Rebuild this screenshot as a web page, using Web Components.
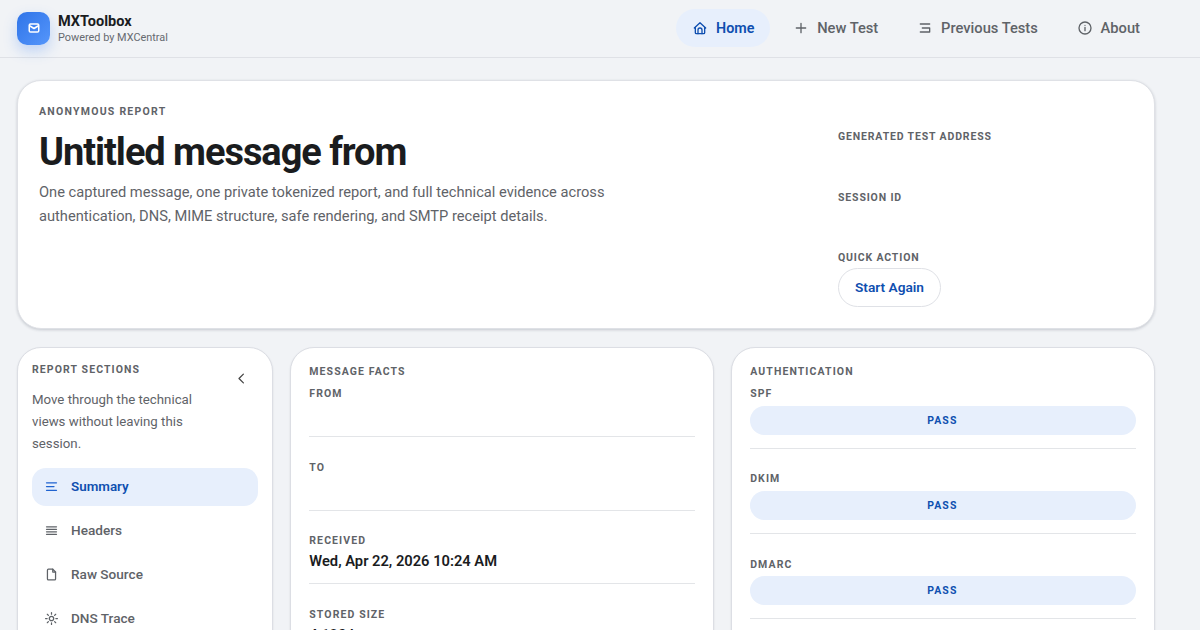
<!DOCTYPE html>
<html lang="en">
<head>
<meta charset="utf-8">
<title>MXToolbox</title>
<style>
  html, body { margin: 0; height: 630px; overflow: hidden; }
  body { background: #f1f3f6; font-family: Roboto, "Liberation Sans", sans-serif; color: #1a1c1e; }
</style>
</head>
<body>
<app-shell>
  <top-bar slot="top">
    <nav-pill active icon="home">Home</nav-pill>
    <nav-pill icon="plus">New Test</nav-pill>
    <nav-pill icon="history">Previous Tests</nav-pill>
    <nav-pill icon="info">About</nav-pill>
  </top-bar>
  <hero-card></hero-card>
  <section-nav slot="side">
    <section-link active icon="summary">Summary</section-link>
    <section-link icon="lines">Headers</section-link>
    <section-link icon="file">Raw Source</section-link>
    <section-link icon="sun">DNS Trace</section-link>
  </section-nav>
  <panel-card slot="mid" heading="Message facts">
    <fact-row label="From"></fact-row>
    <fact-row label="To"></fact-row>
    <fact-row label="Received">Wed, Apr 22, 2026 10:24 AM</fact-row>
    <fact-row label="Stored size">4,123 bytes</fact-row>
  </panel-card>
  <panel-card slot="right" heading="Authentication" style="--row-gap: 23.900px">
    <fact-row label="SPF"><status-pill>PASS</status-pill></fact-row>
    <fact-row label="DKIM"><status-pill>PASS</status-pill></fact-row>
    <fact-row label="DMARC"><status-pill>PASS</status-pill></fact-row>
  </panel-card>
</app-shell>

<script>
const ICONS = {
  home: '<path d="M5 12H3.500L12 4l8.500 8H19"/><path d="M5 11v8a1.500 1.500 0 0 0 1.500 1.500h11A1.500 1.500 0 0 0 19 19v-8"/><path d="M9 20.500V15a3 3 0 0 1 6 0v5.500"/>',
  plus: '<path d="M12 5v14M5 12h14"/>',
  history: '<path d="M5 6h14M8 12h11M5 18h14M19 12v6"/>',
  info: '<circle cx="12" cy="12" r="9"/><path d="M12 11v5M12 8v.01"/>',
  summary: '<path d="M4 6h16M4 12h12M4 18h16"/>',
  lines: '<path d="M4 6h16M4 10h16M4 14h16M4 18h16"/>',
  file: '<path d="M7 3.500h7l4.500 4.500v11a1.500 1.500 0 0 1-1.500 1.500H7A1.500 1.500 0 0 1 5.500 19V5A1.500 1.500 0 0 1 7 3.500z"/><path d="M14 3.500V8h4.500"/>',
  sun: '<circle cx="12" cy="12" r="3.500"/><path d="M12 2.500v2.500M12 19v2.500M2.500 12H5M19 12h2.500M5.300 5.300L7 7M17 17l1.700 1.700M5.300 18.700L7 17M17 7l1.700-1.700"/>',
  back: '<path d="M15 5l-7 7 7 7"/>'
};

function icon(name, size) {
  return `<svg width="${size}" height="${size}" viewBox="0 0 24 24" fill="none" stroke="currentColor" stroke-width="2" stroke-linecap="round" stroke-linejoin="round">${ICONS[name]}</svg>`;
}

// every element does the same thing here, so they share one small base
class BaseEl extends HTMLElement {
  connectedCallback() {
    if (!this.shadowRoot) this.attachShadow({ mode: "open" });
    this.shadowRoot.innerHTML = this.view();
  }
}

class AppShell extends BaseEl {
  view() {
    return `<style>
      :host { display: block; }
      main { width: 1138px; padding: 22px 0 0 17px; display: flex; flex-direction: column; gap: 18px; }
      .cols { display: grid; grid-template-columns: 255.800px 423.400px 423.800px; gap: 17.500px; align-items: start; }
    </style>
    <slot name="top"></slot>
    <main>
      <slot></slot>
      <div class="cols">
        <slot name="side"></slot>
        <slot name="mid"></slot>
        <slot name="right"></slot>
      </div>
    </main>`;
  }
}

class TopBar extends BaseEl {
  view() {
    return `<style>
      :host { display: flex; align-items: center; justify-content: space-between; height: 57px; border-bottom: 1px solid #dfe1e6; padding: 0 44px 0 17px; }
      .brand { display: flex; align-items: center; gap: 8px; }
      .logo { width: 33px; height: 33px; margin-top: -1px; border-radius: 10px; background: linear-gradient(135deg, #2f74e8, #5596fb); color: #fff; display: flex; align-items: center; justify-content: center; box-shadow: 0 6px 14px rgba(60,130,246,.28); }
      .name { font-size: 14.500px; font-weight: 700; line-height: 17px; color: #1a1c1e; }
      .sub { font-size: 10.900px; line-height: 15px; color: #666a70; }
      nav { display: flex; align-items: center; gap: 6.800px; margin-top: -1px; }
    </style>
    <div class="brand">
      <div class="logo"><svg width="12" height="12" viewBox="0 0 24 24" fill="none" stroke="currentColor" stroke-width="3" stroke-linecap="round" stroke-linejoin="round"><rect x="2.500" y="4" width="19" height="16" rx="2.500"/><path d="M4 8l8 5 8-5"/></svg></div>
      <div><div class="name">MXToolbox</div><div class="sub">Powered by MXCentral</div></div>
    </div>
    <nav><slot></slot></nav>`;
  }
}

class NavPill extends BaseEl {
  view() {
    const on = this.hasAttribute("active");
    return `<style>
      :host { display: block; }
      a { display: flex; align-items: center; gap: 8px; height: 38px; padding: 0 16px; border-radius: 19px; font-size: ${on ? "14.300px" : "14.700px"}; font-weight: ${on ? 600 : 500}; color: ${on ? "#0f4fb0" : "#5f6368"}; background: ${on ? "#e7effc" : "transparent"}; }
      svg { flex: none; }
    </style>
    <a>${icon(this.getAttribute("icon"), 16)}<span><slot></slot></span></a>`;
  }
}

class HeroCard extends BaseEl {
  view() {
    return `<style>
      :host { display: grid; grid-template-columns: 1fr 295px; height: 249px; box-sizing: border-box; background: #fff; border: 1px solid #dfe1e6; border-radius: 24px; box-shadow: 0 1px 3px rgba(30,40,60,.2); padding: 0 21px; }
      .eyebrow { font-size: 10.500px; font-weight: 700; letter-spacing: 1.250px; text-transform: uppercase; color: #5f6368; line-height: 14px; }
      .left { padding-top: 23.500px; }
      h1 { margin: 10px 0 0; font-size: 38px; font-weight: 700; letter-spacing: -1.050px; line-height: 46px; color: #1a1c1e; }
      p { margin: 5px 0 0; font-size: 14.660px; line-height: 24px; color: #5f6368; max-width: 600px; }
      .right { padding-top: 48.500px; display: flex; flex-direction: column; }
      .right .eyebrow { letter-spacing: .85px; }
      .item { height: 61px; }
      .item.second { height: 60px; }
      .item.last { height: auto; }
      button { display: block; margin-top: 3px; height: 39px; width: 103px; padding: 0; border-radius: 20px; background: #fff; border: 1px solid #dfe1e6; font: 600 13.700px Roboto, sans-serif; color: #0f4fb0; letter-spacing: 0; }
    </style>
    <div class="left">
      <div class="eyebrow">Anonymous report</div>
      <h1>Untitled message from</h1>
      <p>One captured message, one private tokenized report, and full technical evidence across authentication, DNS, MIME structure, safe rendering, and SMTP receipt details.</p>
    </div>
    <div class="right">
      <div class="item eyebrow">Generated test address</div>
      <div class="item second eyebrow">Session ID</div>
      <div class="item last eyebrow">Quick action<button>Start Again</button></div>
    </div>`;
  }
}

class SectionNav extends BaseEl {
  view() {
    return `<style>
      :host { display: block; position: relative; box-sizing: border-box; height: 400px; background: #fff; border: 1px solid #dcdee4; border-radius: 24px; box-shadow: 0 1px 2px rgba(30,40,60,.12); padding: 15px 14px; }
      .eyebrow { font-size: 10.500px; font-weight: 700; letter-spacing: 1.100px; text-transform: uppercase; color: #5f6368; line-height: 14px; }
      p { margin: 12px 0 13px; width: 175px; font-size: 13.250px; line-height: 22px; color: #5f6368; }
      button { position: absolute; top: 22px; right: 21px; padding: 0; border: 0; background: none; color: #444; width: 18px; height: 20px; }
      .links { display: flex; flex-direction: column; gap: 6px; }
    </style>
    <div class="eyebrow">Report sections</div>
    <button>${icon("back", 15)}</button>
    <p>Move through the technical views without leaving this session.</p>
    <div class="links"><slot></slot></div>`;
  }
}

class SectionLink extends BaseEl {
  view() {
    const on = this.hasAttribute("active");
    return `<style>
      :host { display: block; }
      a { display: flex; align-items: center; gap: 12px; box-sizing: border-box; height: 38px; padding: 0 12px 2px; border-radius: 14px; font-size: ${on ? "13.400px" : "13.600px"}; font-weight: ${on ? 600 : 500}; color: ${on ? "#0f4fb0" : "#5f6368"}; background: ${on ? "#e7effc" : "transparent"}; }
      svg { flex: none; color: ${on ? "#1f63d0" : "#5f6368"}; }
    </style>
    <a>${icon(this.getAttribute("icon"), 15)}<span><slot></slot></span></a>`;
  }
}

class PanelCard extends BaseEl {
  view() {
    return `<style>
      :host { display: block; box-sizing: border-box; height: 400px; background: #fff; border: 1px solid #dcdee4; border-radius: 24px; box-shadow: 0 1px 2px rgba(30,40,60,.12); padding: 17px 18px; }
      .eyebrow { font-size: 10.500px; font-weight: 700; letter-spacing: 1.100px; text-transform: uppercase; color: #5f6368; line-height: 14px; margin-bottom: 8.200px; }
    </style>
    <div class="eyebrow">${this.getAttribute("heading")}</div>
    <slot></slot>`;
  }
}

class FactRow extends BaseEl {
  view() {
    return `<style>
      :host { display: block; border-bottom: 1px solid #e3e5e8; padding-bottom: 12px; margin-bottom: var(--row-gap, 23.500px); }
      .label { font-size: 10.500px; font-weight: 700; letter-spacing: 1.100px; text-transform: uppercase; color: #5f6368; line-height: 14px; margin-bottom: 3px; }
      .value { display: flow-root; font-size: 14.700px; font-weight: 600; line-height: 20px; min-height: 20px; color: #1a1c1e; }
    </style>
    <div class="label">${this.getAttribute("label")}</div>
    <div class="value"><slot></slot></div>`;
  }
}

class StatusPill extends BaseEl {
  view() {
    return `<style>
      :host { display: block; box-sizing: border-box; height: 29px; margin: 1.500px 0 .900px; padding-right: 1.500px; line-height: 29px; text-align: center; border-radius: 15px; background: #e7effc; color: #0f4fb0; font-size: 10.500px; font-weight: 700; letter-spacing: 1.100px; }
    </style><slot></slot>`;
  }
}

customElements.define("app-shell", AppShell);
customElements.define("top-bar", TopBar);
customElements.define("nav-pill", NavPill);
customElements.define("hero-card", HeroCard);
customElements.define("section-nav", SectionNav);
customElements.define("section-link", SectionLink);
customElements.define("panel-card", PanelCard);
customElements.define("fact-row", FactRow);
customElements.define("status-pill", StatusPill);
</script>
</body>
</html>
